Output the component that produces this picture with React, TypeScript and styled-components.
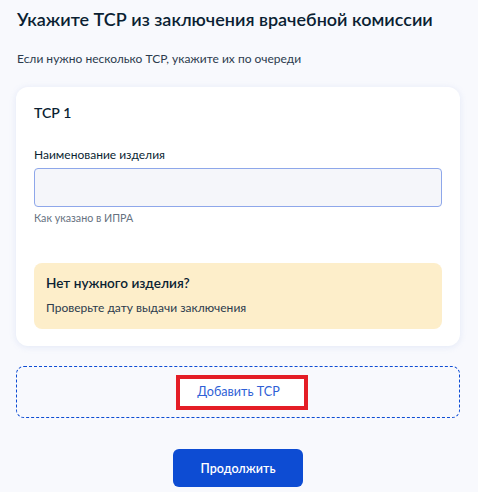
import React from "react";
import styled, { createGlobalStyle } from "styled-components";

const GlobalStyle = createGlobalStyle`
  html, body {
    margin: 0;
    padding: 0;
    background: #f8f9fd;
  }
  body {
    font-family: Lato, "Noto Sans", sans-serif;
    color: #0b1f33;
    -webkit-font-smoothing: antialiased;
  }
  * { box-sizing: border-box; }
`;

const Page = styled.main`
  width: 444px;
  margin-left: 16px;
  padding-top: 5px;
  display: flex;
  flex-direction: column;
`;

const Title = styled.h1`
  margin: 0 0 0 1px;
  font-size: 18px;
  line-height: 28px;
  font-weight: 600;
  color: #0b1f33;
  white-space: nowrap;
`;

const Subtitle = styled.p`
  margin: 18px 0 0 1px;
  font-size: 12px;
  line-height: 16px;
  color: #2c3b4d;
`;

const Card = styled.section`
  margin-top: 20px;
  background: #ffffff;
  border-radius: 12px;
  box-shadow: 0 1px 6px rgba(200, 210, 240, 0.45);
  padding: 16px 18px 17px 18px;
  display: flex;
  flex-direction: column;
`;

const CardTitle = styled.h2`
  margin: 0;
  font-size: 14px;
  line-height: 20px;
  font-weight: 600;
  color: #0b1f33;
`;

const Field = styled.div`
  margin-top: 24px;
  display: flex;
  flex-direction: column;
`;

const Label = styled.label`
  font-size: 12px;
  line-height: 16px;
  color: #0b1f33;
`;

const Input = styled.input`
  margin-top: 5px;
  height: 39px;
  width: 100%;
  background: #f5f6fa;
  border: 1px solid #8ea7ea;
  border-radius: 4px;
  outline: none;
  font: inherit;
`;

const Hint = styled.span`
  margin-top: 4px;
  font-size: 10.7px;
  line-height: 14px;
  color: #66727f;
`;

const Notice = styled.div`
  margin-top: 38px;
  background: #fdeeca;
  border-radius: 8px;
  padding: 10px 12px 13px;
  display: flex;
  flex-direction: column;
  gap: 7px;
`;

const NoticeTitle = styled.h3`
  margin: 0;
  font-size: 13.6px;
  line-height: 20px;
  font-weight: 600;
  color: #0b1f33;
`;

const NoticeText = styled.p`
  margin: 0;
  font-size: 12px;
  line-height: 16px;
  color: #2c3b4d;
`;

const AddBox = styled.div`
  margin-top: 20px;
  height: 52px;
  border: 1px dashed #0d4cd3;
  border-radius: 8px;
  display: flex;
  align-items: center;
  justify-content: center;
`;

const Highlight = styled.span`
  display: inline-flex;
  align-items: center;
  height: 35px;
  margin-left: 8px;
  padding: 0 24px 0 17px;
  background: #ffffff;
  border: 4px solid #e41d26;
`;

const AddLink = styled.a`
  font-size: 12.6px;
  line-height: 16px;
  color: #2f5fd6;
  text-decoration: none;
  cursor: pointer;
`;

const Actions = styled.div`
  margin-top: 31px;
  display: flex;
  justify-content: center;
`;

const PrimaryButton = styled.button`
  height: 38px;
  width: 130px;
  border: none;
  border-radius: 6px;
  background: #0d4cd3;
  color: #ffffff;
  font-family: Lato, "Noto Sans", sans-serif;
  font-size: 12.5px;
  font-weight: 600;
  cursor: pointer;
`;

export default function App() {
  return (
    <>
      <GlobalStyle />
      <Page>
        <Title>Укажите ТСР из заключения врачебной комиссии</Title>
        <Subtitle>Если нужно несколько ТСР, укажите их по очереди</Subtitle>
        <Card>
          <CardTitle>ТСР 1</CardTitle>
          <Field>
            <Label>Наименование изделия</Label>
            <Input type="text" />
            <Hint>Как указано в ИПРА</Hint>
          </Field>
          <Notice>
            <NoticeTitle>Нет нужного изделия?</NoticeTitle>
            <NoticeText>Проверьте дату выдачи заключения</NoticeText>
          </Notice>
        </Card>
        <AddBox>
          <Highlight>
            <AddLink>Добавить ТСР</AddLink>
          </Highlight>
        </AddBox>
        <Actions>
          <PrimaryButton>Продолжить</PrimaryButton>
        </Actions>
      </Page>
    </>
  );
}
